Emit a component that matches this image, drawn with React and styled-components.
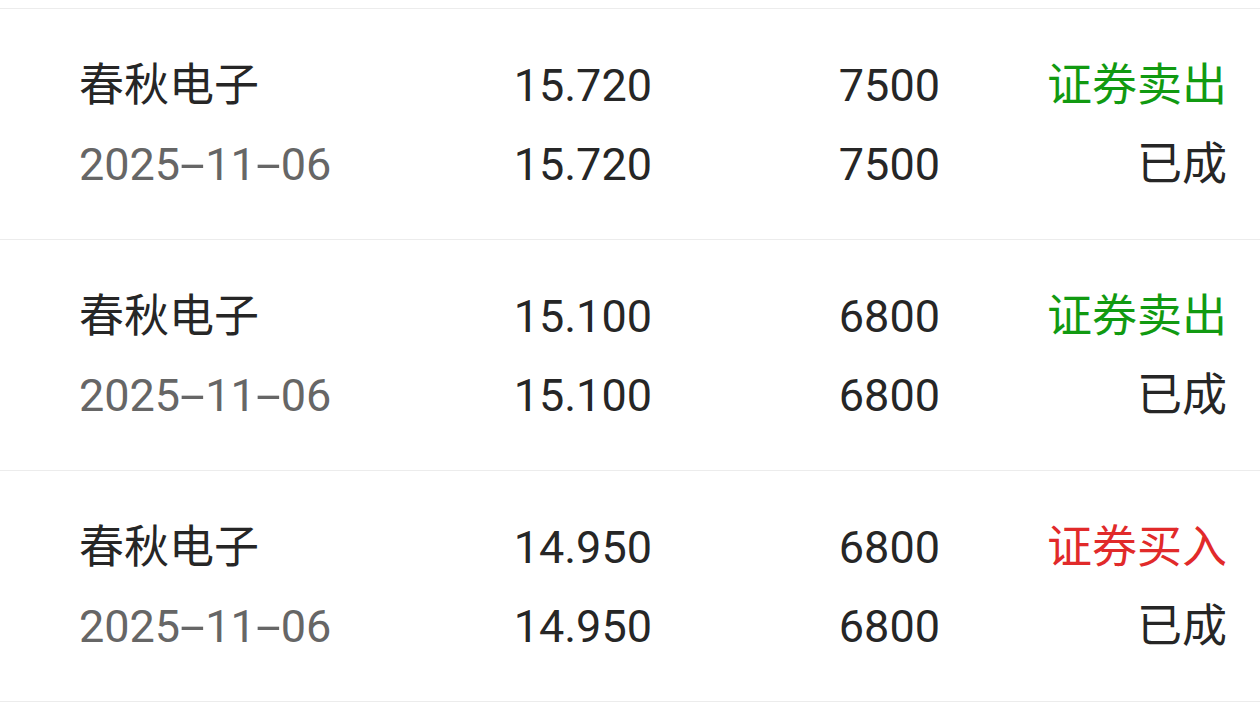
import React from "react";
import styled, { createGlobalStyle } from "styled-components";

const Global = createGlobalStyle`
  html, body { margin: 0; padding: 0; background: #ffffff; }
  body { font-family: "Roboto", "Noto Sans CJK SC", sans-serif; }
`;

const List = styled.div`
  padding-top: 8px;
  background: #ffffff;
`;

const Row = styled.div`
  display: grid;
  grid-template-columns: 341px 232px 288px 1fr;
  grid-template-rows: 60px 60px;
  row-gap: 19px;
  padding: 47px 33px 44px 79px;
  border-top: 1px solid #ececec;
  &:last-child {
    border-bottom: 1px solid #ececec;
  }
`;

const Cell = styled.div`
  font-size: 45px;
  line-height: 60px;
  white-space: nowrap;
  text-align: ${(p) => (p.$right ? "right" : "left")};
  color: ${(p) => p.$color || "#262626"};
`;

const Dash = styled.span`
  display: inline-block;
  width: 25px;
  text-align: center;
  transform: scaleX(2);
`;

const GREEN = "#119a11";
const RED = "#e12a2a";

const rows = [
  { name: "春秋电子", date: "2025-11-06", price: "15.720", qty: "7500", type: "证券卖出", status: "已成" },
  { name: "春秋电子", date: "2025-11-06", price: "15.100", qty: "6800", type: "证券卖出", status: "已成" },
  { name: "春秋电子", date: "2025-11-06", price: "14.950", qty: "6800", type: "证券买入", status: "已成" },
];

function DateText({ value }) {
  const parts = value.split("-");
  return parts.map((p, i) => (
    <React.Fragment key={i}>
      {i > 0 && <Dash>-</Dash>}
      {p}
    </React.Fragment>
  ));
}

export default function App() {
  return (
    <>
      <Global />
      <List>
        {rows.map((r, i) => (
          <Row key={i}>
            <Cell>{r.name}</Cell>
            <Cell $right>{r.price}</Cell>
            <Cell $right>{r.qty}</Cell>
            <Cell $right $color={r.type === "证券买入" ? RED : GREEN}>{r.type}</Cell>
            <Cell $color="#666666"><DateText value={r.date} /></Cell>
            <Cell $right>{r.price}</Cell>
            <Cell $right>{r.qty}</Cell>
            <Cell $right>{r.status}</Cell>
          </Row>
        ))}
      </List>
    </>
  );
}
